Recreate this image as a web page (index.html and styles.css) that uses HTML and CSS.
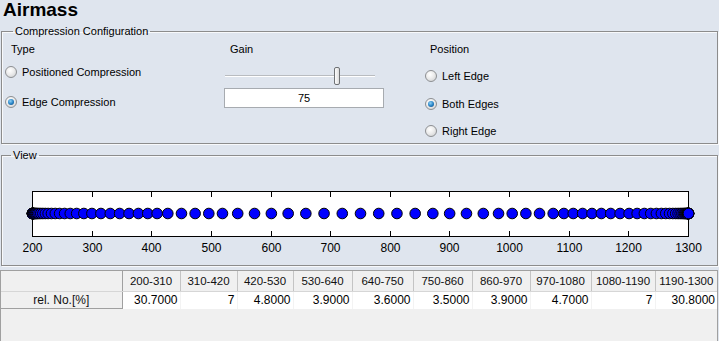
FILE: index.html
```html
<!DOCTYPE html>
<html>
<head>
<title>Airmass</title>
<link rel="stylesheet" href="styles.css">
</head>
<body>
<h1>Airmass</h1>

<fieldset class="group config">
  <legend>Compression Configuration</legend>
  <div class="config-grid">
    <div class="col col-type">
      <div class="label">Type</div>
      <div class="radio-row"><span class="radio"></span>Positioned Compression</div>
      <div class="radio-row"><span class="radio checked"></span>Edge Compression</div>
    </div>
    <div class="col col-gain">
      <div class="label">Gain</div>
      <div class="slider">
        <div class="track"></div>
        <div class="thumb"></div>
      </div>
      <div class="gain-box">75</div>
    </div>
    <div class="col col-pos">
      <div class="label">Position</div>
      <div class="radio-row"><span class="radio"></span>Left Edge</div>
      <div class="radio-row"><span class="radio checked"></span>Both Edges</div>
      <div class="radio-row"><span class="radio"></span>Right Edge</div>
    </div>
  </div>
</fieldset>

<fieldset class="group view">
  <legend>View</legend>
  <svg id="plot" width="715" height="103">
    <rect x="30.5" y="29.5" width="656" height="45" fill="#fff" stroke="#000"></rect>
    <g id="ticks"></g>
    <g id="dots"></g>
  </svg>
</fieldset>

<div class="table-wrap">
  <table class="bins">
    <colgroup>
      <col class="c-head">
      <col class="c58"><col class="c57"><col class="c56"><col class="c59"><col class="c61">
      <col class="c59"><col class="c58"><col class="c61"><col class="c64"><col class="c62">
    </colgroup>
    <thead>
      <tr id="bin-head"><th class="rowhead"></th></tr>
    </thead>
    <tbody>
      <tr id="bin-vals"><th class="rowhead">rel. No.[%]</th></tr>
    </tbody>
  </table>
</div>

<script>
  const svgNS = 'http://www.w3.org/2000/svg';
  const plotLeft = 30.5;
  const plotWidth = 656;
  const bins = [
    ['200-310', '30.7000'], ['310-420', '7'], ['420-530', '4.8000'],
    ['530-640', '3.9000'], ['640-750', '3.6000'], ['750-860', '3.5000'],
    ['860-970', '3.9000'], ['970-1080', '4.7000'], ['1080-1190', '7'],
    ['1190-1300', '30.8000']
  ];

  function xOf(value) {
    return plotLeft + (value - 200) / 1100 * plotWidth;
  }

  function el(name, attrs) {
    const node = document.createElementNS(svgNS, name);
    for (const k in attrs) node.setAttribute(k, attrs[k]);
    return node;
  }

  // edge compression: cumulative share per bin, heavy at both ends
  function spread(u) {
    const knots = [[0.307, 0.1], [0.377, 0.2], [0.425, 0.3], [0.464, 0.4], [0.5, 0.5]];
    if (u > 0.5) return 1 - spread(1 - u);
    if (u <= 0.307) return 0.1 * Math.pow(u / 0.307, 4.3);
    for (let i = 1; i < knots.length; i++) {
      const [u1, v1] = knots[i];
      const [u0, v0] = knots[i - 1];
      if (u <= u1) return v0 + (u - u0) / (u1 - u0) * (v1 - v0);
    }
    return 0.5;
  }

  function renderPlot() {
    const ticks = document.getElementById('ticks');
    for (let v = 200; v <= 1300; v += 100) {
      const x = Math.round(xOf(v) - 0.5) + 0.5;
      ticks.appendChild(el('line', { x1: x, y1: 30, x2: x, y2: 35, stroke: '#000' }));
      ticks.appendChild(el('line', { x1: x, y1: 69, x2: x, y2: 74, stroke: '#000' }));
      const label = el('text', { x: x, y: 89.5, 'text-anchor': 'middle', class: 'axis-label' });
      label.textContent = v;
      ticks.appendChild(label);
    }
    const dots = document.getElementById('dots');
    const n = 101;
    for (let i = 0; i < n; i++) {
      const v = spread(i / (n - 1));
      dots.appendChild(el('circle', {
        cx: plotLeft + v * plotWidth, cy: 51.5, r: 5.3,
        fill: '#0000ff', stroke: '#000', 'stroke-width': 1
      }));
    }
  }

  function renderTable() {
    const head = document.getElementById('bin-head');
    const vals = document.getElementById('bin-vals');
    bins.forEach(([range, value]) => {
      const th = document.createElement('th');
      th.innerText = range;
      head.appendChild(th);
      const td = document.createElement('td');
      td.innerText = value;
      vals.appendChild(td);
    });
  }

  document.addEventListener('DOMContentLoaded', () => {
    renderPlot();
    renderTable();
  });
</script>
</body>
</html>
```

FILE: styles.css
```css
  html, body {
    margin: 0;
    height: 100%;
  }
  body {
    font-family: "Liberation Sans", Arial, sans-serif;
    font-size: 11px;
    color: #000;
    background-color: #dfe5ee;
    width: 719px;
    height: 341px;
    overflow: hidden;
    display: flex;
    flex-direction: column;
  }
  h1 {
    margin: 0 0 0 3px;
    font-size: 19px;
    line-height: 20px;
    height: 20px;
  }
  .group {
    margin: 5px 1px 0 1px;
    padding: 0;
    border: 1px solid #8c8c8c;
    box-shadow: inset 1px 1px 0 #f8f9fb, 1px 1px 0 #f8f9fb;
    min-width: 0;
  }
  .group legend {
    margin-left: 11px;
    padding: 0 2px;
    line-height: 13px;
    font-size: 11px;
  }
  .view legend {
    margin-left: 9px;
  }
  .config-grid {
    display: grid;
    grid-template-columns: 219px 201px 1fr;
    padding: 4px 0 5px 3px;
  }
  .col {
    display: flex;
    flex-direction: column;
    align-items: flex-start;
  }
  .label {
    line-height: 14px;
    margin-left: 6px;
  }
  .col-pos .label {
    margin-left: 5px;
  }
  .radio-row {
    display: flex;
    align-items: center;
    gap: 5px;
    height: 14px;
    line-height: 14px;
  }
  .col-type .radio-row {
    margin-top: 9px;
  }
  .col-type .radio-row + .radio-row {
    margin-top: 16px;
  }
  .col-pos .radio-row {
    margin-top: 13px;
  }
  .col-pos .radio-row + .radio-row {
    margin-top: 14px;
  }
  .col-pos .radio-row:last-child {
    margin-top: 13px;
  }
  .radio {
    width: 12px;
    height: 12px;
    box-sizing: border-box;
    border-radius: 50%;
    border: 1px solid #8d8f92;
    background: radial-gradient(circle at 40% 35%, #ffffff 0%, #ececec 45%, #c9cbcd 100%);
    position: relative;
  }
  .radio.checked::after {
    content: "";
    position: absolute;
    left: 2px;
    top: 2px;
    width: 6px;
    height: 6px;
    border-radius: 50%;
    background: radial-gradient(circle at 40% 35%, #8fd0f5 0%, #2a86c8 50%, #0d3f73 100%);
  }
  .slider {
    position: relative;
    width: 150px;
    height: 18px;
    margin: 11px 0 0 1px;
  }
  .track {
    margin-top: 8px;
    height: 2px;
    box-sizing: border-box;
    border-top: 1px solid #b9bcc0;
    background: #fff;
  }
  .thumb {
    position: absolute;
    left: 109px;
    top: 0;
    width: 6px;
    height: 18px;
    box-sizing: border-box;
    border: 1px solid #6f7275;
    border-radius: 2px;
    background: linear-gradient(90deg, #fdfdfd, #dcdcdc);
  }
  .gain-box {
    margin-top: 3px;
    width: 160px;
    height: 20px;
    box-sizing: border-box;
    border: 1px solid #a7abb0;
    background: #fff;
    text-align: center;
    line-height: 18px;
  }
  #plot {
    display: block;
  }
  .axis-label {
    font-family: "Liberation Sans", Arial, sans-serif;
    font-size: 12px;
    fill: #000;
  }
  .table-wrap {
    flex: 1;
    margin: 4px 1px 0 0;
    border: 1px solid #a0a0a0;
    border-bottom: none;
    background: #f0f0f0;
  }
  .bins {
    border-collapse: collapse;
    table-layout: fixed;
    width: 716px;
    font-size: 12px;
  }
  .c-head { width: 121px; }
  .c56 { width: 56px; }
  .c57 { width: 57px; }
  .c58 { width: 58px; }
  .c59 { width: 59px; }
  .c61 { width: 61px; }
  .c62 { width: 62px; }
  .c64 { width: 64px; }
  .bins th {
    font-weight: normal;
    height: 20px;
    padding: 0;
    background: #f0f0f0;
    border-right: 1px solid #c4c4c4;
    border-bottom: 1px solid #d6d6d6;
    color: #111;
    font-size: 11.5px;
    white-space: nowrap;
  }
  .bins th.rowhead {
    border-right: 1px solid #a0a0a0;
    font-size: 12px;
  }
  #bin-vals th.rowhead {
    height: 16px;
    border-bottom: 1px solid #a0a0a0;
  }
  .bins td {
    background: #fff;
    text-align: right;
    padding: 0 2px 0 0;
    height: 16px;
    border-right: 1px solid #f3f3f3;
    white-space: nowrap;
  }
  .bins tr th:last-child, .bins tr td:last-child {
    border-right: none;
  }
```
